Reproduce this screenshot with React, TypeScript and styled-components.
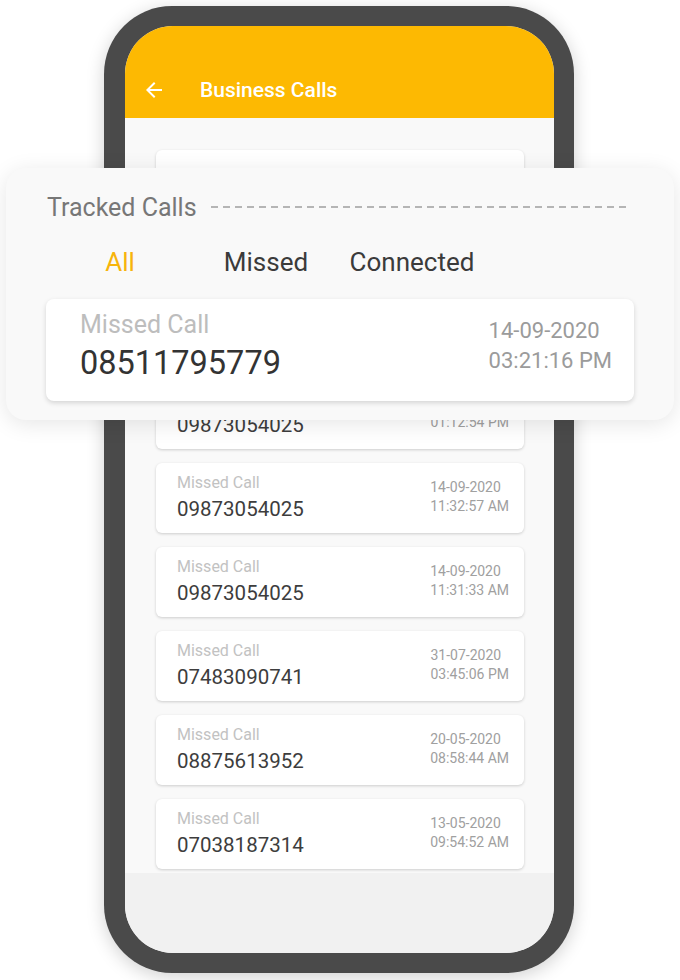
import React from "react"
import styled, { createGlobalStyle } from "styled-components"

type Call = {
  number: string
  date: string
  time: string
}

const calls: Call[] = [
  { number: "09873054025", date: "14-09-2020", time: "02:05:11 PM" },
  { number: "09873054025", date: "14-09-2020", time: "01:12:54 PM" },
  { number: "09873054025", date: "14-09-2020", time: "11:32:57 AM" },
  { number: "09873054025", date: "14-09-2020", time: "11:31:33 AM" },
  { number: "07483090741", date: "31-07-2020", time: "03:45:06 PM" },
  { number: "08875613952", date: "20-05-2020", time: "08:58:44 AM" },
  { number: "07038187314", date: "13-05-2020", time: "09:54:52 AM" },
]

const tabs = ["All", "Missed", "Connected"]

const App = () => {
  return (
    <Page>
      <GlobalStyle />
      <Phone>
        <Screen>
          <Header>
            <BackArrow viewBox="0 0 24 24">
              <path d="M20 11H7.83l5.59-5.59L12 4l-8 8 8 8 1.41-1.41L7.83 13H20v-2z" />
            </BackArrow>
            <HeaderTitle>Business Calls</HeaderTitle>
          </Header>
          <List>
            <FilterCard />
            {calls.map((call, i) => (
              <CallCard key={i}>
                <CallInfo>
                  <Label>Missed Call</Label>
                  <Number>{call.number}</Number>
                </CallInfo>
                <Stamp>
                  <span>{call.date}</span>
                  <span>{call.time}</span>
                </Stamp>
              </CallCard>
            ))}
          </List>
          <BottomBar />
        </Screen>
      </Phone>

      <Panel>
        <PanelHead>
          <PanelTitle>Tracked Calls</PanelTitle>
          <Dashes />
        </PanelHead>
        <Tabs>
          {tabs.map((t) => (
            <Tab key={t} $active={t === "All"}>
              {t}
            </Tab>
          ))}
        </Tabs>
        <BigCard>
          <div>
            <BigLabel>Missed Call</BigLabel>
            <BigNumber>08511795779</BigNumber>
          </div>
          <BigStamp>
            <span>14-09-2020</span>
            <span>03:21:16 PM</span>
          </BigStamp>
        </BigCard>
      </Panel>
    </Page>
  )
}

const GlobalStyle = createGlobalStyle`
  html, body {
    margin: 0;
    padding: 0;
    background: #ffffff;
    font-family: Roboto, "Noto Sans", sans-serif;
  }
`

const Page = styled.main`
  position: relative;
  width: 680px;
  height: 980px;
  overflow: hidden;
  background: #ffffff;
  display: flex;
  padding: 6px 0 0 104px;
  box-sizing: border-box;
`

const Phone = styled.div`
  width: 470px;
  height: 967px;
  box-sizing: border-box;
  padding: 20px 20px 20px 21px;
  background: #4a4a4a;
  border-radius: 68px;
  box-shadow: 0 4px 18px rgba(0, 0, 0, 0.18);
`

const Screen = styled.div`
  height: 100%;
  border-radius: 48px;
  overflow: hidden;
  display: flex;
  flex-direction: column;
  background: #f1f1f1;
`

const Header = styled.header`
  height: 92px;
  flex-shrink: 0;
  box-sizing: border-box;
  padding: 38px 0 2px 17px;
  background: #fdb902;
  display: flex;
  align-items: center;
`

const BackArrow = styled.svg`
  width: 24px;
  height: 24px;
  fill: #ffffff;
`

const HeaderTitle = styled.h1`
  margin: 0 0 0 34px;
  color: #ffffff;
  font-size: 21px;
  font-weight: 500;
`

const List = styled.div`
  height: 755px;
  flex-shrink: 0;
  box-sizing: border-box;
  padding: 32px 30px 0 31px;
  background: #f9f9f9;
  display: flex;
  flex-direction: column;
  gap: 14px;
`

const CardBase = styled.div`
  flex-shrink: 0;
  background: #ffffff;
  border-radius: 6px;
  box-shadow: 0 1px 3px rgba(0, 0, 0, 0.18);
`

const FilterCard = styled(CardBase)`
  height: 131px;
`

const CallCard = styled(CardBase)`
  height: 70px;
  box-sizing: border-box;
  padding: 10px 15px 0 21px;
  display: flex;
  justify-content: space-between;
`

const CallInfo = styled.div`
  display: flex;
  flex-direction: column;
`

const Label = styled.span`
  color: #c2c2c2;
  font-size: 16px;
  line-height: 20px;
`

const Number = styled.span`
  margin-top: 4px;
  color: #3d3d3d;
  font-size: 20.5px;
  line-height: 24px;
`

const Stamp = styled.div`
  display: flex;
  flex-direction: column;
  padding-top: 5px;
  color: #a0a0a0;
  font-size: 14px;
  line-height: 19px;
`

const BottomBar = styled.div`
  flex: 1;
  background: #f1f1f1;
`

const Panel = styled.section`
  position: absolute;
  left: 6px;
  top: 168px;
  width: 668px;
  height: 252px;
  box-sizing: border-box;
  padding: 22px 40px 19px;
  border-radius: 20px;
  background: #f9f9f9;
  box-shadow: 0 4px 22px rgba(0, 0, 0, 0.1);
  display: flex;
  flex-direction: column;
`

const PanelHead = styled.div`
  height: 34px;
  display: flex;
  align-items: center;
  padding-left: 1px;
`

const PanelTitle = styled.h2`
  margin: 0;
  color: #777777;
  font-size: 25px;
  font-weight: 400;
`

const Dashes = styled.div`
  margin-left: 14px;
  margin-right: 7px;
  flex: 1;
  height: 1.5px;
  background: repeating-linear-gradient(
    to right,
    #b5b5b5 0 7px,
    transparent 7px 12px
  );
`

const Tabs = styled.nav`
  margin-top: 21px;
  height: 34px;
  display: flex;
  padding-left: 1px;
`

const Tab = styled.span<{ $active?: boolean }>`
  width: 146px;
  text-align: center;
  line-height: 34px;
  font-size: 26px;
  color: ${(p) => (p.$active ? "#f7b40c" : "#3b3b3b")};
`

const BigCard = styled.div`
  margin-top: 20px;
  height: 102px;
  box-sizing: border-box;
  padding: 11px 22px 0 34px;
  background: #ffffff;
  border-radius: 8px;
  box-shadow: 0 2px 5px rgba(0, 0, 0, 0.15);
  display: flex;
  justify-content: space-between;
`

const BigLabel = styled.div`
  color: #bdbdbd;
  font-size: 25px;
  line-height: 30px;
`

const BigNumber = styled.div`
  margin-top: 4px;
  color: #333333;
  font-size: 32.5px;
  line-height: 38px;
`

const BigStamp = styled.div`
  display: flex;
  flex-direction: column;
  padding-top: 6px;
  color: #9b9b9b;
  font-size: 22px;
  line-height: 30px;
`

export default App
